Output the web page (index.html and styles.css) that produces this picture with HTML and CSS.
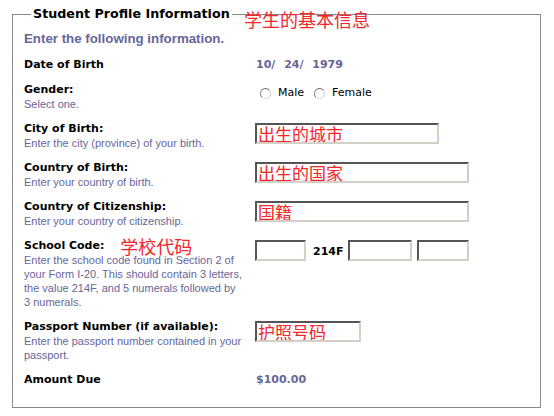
FILE: index.html
```html
<!DOCTYPE html>
<html lang="en">
<head>
    <meta charset="UTF-8">
    <title>Student Profile Information</title>
    <link rel="stylesheet" href="styles.css">
</head>
<body>
    <div class="page">
        <fieldset class="profile">
            <legend>Student Profile Information</legend>
            <span class="note note-title">学生的基本信息</span>

            <p class="intro">Enter the following information.</p>

            <div class="row">
                <div class="label"><strong>Date of Birth</strong></div>
                <div class="value"><span class="data date">10/ 24/ 1979</span></div>
            </div>

            <div class="row">
                <div class="label">
                    <strong>Gender:</strong>
                    <span class="hint">Select one.</span>
                </div>
                <div class="value radios">
                    <label><input type="radio" name="gender"> Male</label>
                    <label><input type="radio" name="gender"> Female</label>
                </div>
            </div>

            <div class="row">
                <div class="label">
                    <strong>City of Birth:</strong>
                    <span class="hint">Enter the city (province) of your birth.</span>
                </div>
                <div class="value"><input type="text" class="field w-city" value="出生的城市"></div>
            </div>

            <div class="row">
                <div class="label">
                    <strong>Country of Birth:</strong>
                    <span class="hint">Enter your country of birth.</span>
                </div>
                <div class="value"><input type="text" class="field w-wide" value="出生的国家"></div>
            </div>

            <div class="row">
                <div class="label">
                    <strong>Country of Citizenship:</strong>
                    <span class="hint">Enter your country of citizenship.</span>
                </div>
                <div class="value"><input type="text" class="field w-wide" value="国籍"></div>
            </div>

            <div class="row">
                <div class="label">
                    <strong>School Code:</strong><span class="note note-inline">学校代码</span>
                    <span class="hint">Enter the school code found in Section 2 of your Form I-20. This should contain 3 letters, the value 214F, and 5 numerals followed by 3 numerals.</span>
                </div>
                <div class="value code">
                    <input type="text" class="field w-code1">
                    <strong>214F</strong>
                    <input type="text" class="field w-code2">
                    <input type="text" class="field w-code3">
                </div>
            </div>

            <div class="row">
                <div class="label">
                    <strong>Passport Number (if available):</strong>
                    <span class="hint">Enter the passport number contained in your passport.</span>
                </div>
                <div class="value"><input type="text" class="field w-pass" value="护照号码"></div>
            </div>

            <div class="row">
                <div class="label"><strong>Amount Due</strong></div>
                <div class="value"><span class="data">$100.00</span></div>
            </div>
        </fieldset>
    </div>
</body>
</html>
```

FILE: styles.css
```css
body {
    margin: 0;
    background: #fff;
    font-family: "DejaVu Sans", Verdana, sans-serif;
    font-size: 11px;
    color: #000;
}

.page {
    padding: 6px 13px 0 12px;
}

.profile {
    position: relative;
    width: 505px;
    margin: 0;
    padding: 0 11px 9px 11px;
    border: 1px solid #888;
}

legend {
    margin-left: 7px;
    padding: 0 2px;
    font-size: 12.7px;
    font-weight: bold;
    line-height: 16px;
}

.note {
    color: #f2262b;
    font-family: "Noto Sans CJK SC", sans-serif;
    font-size: 18px;
}

.note-title {
    position: absolute;
    left: 231px;
    top: -13px;
    line-height: 20px;
}

.note-inline {
    display: inline-block;
    height: 14px;
    margin-left: 16px;
    line-height: 14px;
    vertical-align: top;
}

.intro {
    margin: 8px 0 10px;
    color: #666699;
    font-family: "Liberation Sans", Arial, sans-serif;
    font-size: 13.3px;
    font-weight: bold;
    line-height: 18px;
}

.row {
    display: grid;
    grid-template-columns: 231px 1fr;
    margin-bottom: 11px;
    line-height: 14px;
}

.hint {
    display: block;
    color: #666699;
    font-family: "Liberation Sans", Arial, sans-serif;
    font-size: 11px;
    padding-right: 12px;
}

.data {
    color: #666699;
    font-weight: bold;
    padding-left: 1px;
}

.date {
    word-spacing: 5px;
}

.radios {
    display: flex;
    align-items: flex-start;
    gap: 5px;
    padding-top: 3px;
}

.radios label {
    display: flex;
    align-items: center;
    gap: 7px;
    line-height: 14px;
}

input[type="radio"] {
    appearance: none;
    margin: 0 0 0 5px;
    width: 11px;
    height: 11px;
    border-radius: 50%;
    border: 1px solid;
    border-color: #666 #ccc #ddd #888;
    background: #fff;
}

.field {
    box-sizing: border-box;
    height: 21px;
    margin: 1px 0 0;
    padding: 0 1px;
    border: 2px solid;
    border-color: #555 #d4d0c8 #d4d0c8 #555;
    color: #f2262b;
    font-family: "Noto Sans CJK SC", sans-serif;
    font-size: 17px;
    line-height: 17px;
}

.code {
    display: flex;
    align-items: flex-start;
    gap: 5px;
}

.code strong {
    margin: 6px 0 0 2px;
}

.w-city { width: 184px; }
.w-wide { width: 214px; }
.w-pass { width: 106px; }
.w-code1 { width: 51px; }
.w-code2 { width: 64px; }
.w-code3 { width: 52px; }
```
